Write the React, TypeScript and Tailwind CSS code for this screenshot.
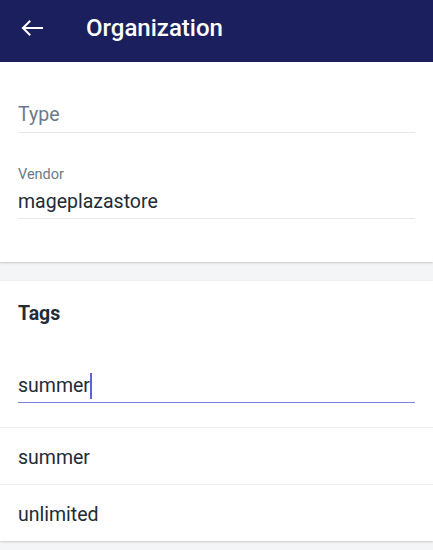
import { useState } from 'react';

export default function App() {
  const [tag, setTag] = useState('summer');
  const suggestions = ['summer', 'unlimited'];

  return (
    <div className="w-[433px] h-[550px] bg-[#f4f5f7] overflow-hidden" style={{ fontFamily: 'Roboto, "Liberation Sans", sans-serif' }}>
      <header className="h-[62px] bg-[#1c1f5e] flex items-center pb-[6px]">
        <button className="w-[86px] h-full flex items-center pl-[21px] text-white">
          <svg width="22" height="16" viewBox="0 0 22 16" fill="none" stroke="currentColor" strokeWidth="2" strokeLinecap="square">
            <path d="M21 8H2.5" />
            <path d="M8.5 1.5L2 8l6.5 6.5" />
          </svg>
        </button>
        <h1 className="text-white text-[24px] font-medium leading-[30px]">Organization</h1>
      </header>

      {/* type / vendor */}
      <section className="bg-white px-[18px] pt-[40px] pb-[43px] shadow-[0_1px_2px_rgba(0,0,0,0.18)] mb-[19px]">
        <div className="border-b border-[#e6e9ec] pb-[4px]">
          <div className="text-[19.5px] text-[#6b7a8a] leading-[26px]">Type</div>
        </div>
        <div className="mt-[33px] border-b border-[#e6e9ec] pb-[2px]">
          <div className="text-[14.5px] text-[#6b7a8a] leading-[18px]">Vendor</div>
          <div className="text-[19.5px] text-[#222b36] leading-[28px] mt-[4px]">mageplazastore</div>
        </div>
      </section>

      {/* tags */}
      <section className="bg-white shadow-[0_1px_2px_rgba(0,0,0,0.18)]">
        <div className="px-[18px] pt-[21px]">
          <h2 className="text-[19.5px] font-bold text-[#222b36] leading-[24px]">Tags</h2>
          <div className="mt-[46px] h-[28px] border-b border-[#7b82e0] box-content pb-[2px] flex items-center">
            <span className="text-[19.5px] text-[#222b36] leading-[28px]">{tag}</span>
            <span className="w-[2px] h-[26px] bg-[#5c64d6]" />
          </div>
        </div>
        <div className="mt-[24px]">
          {suggestions.map((s) => (
            <div key={s} onClick={() => setTag(s)} className="border-t border-[#eceef0] px-[18px] pt-[3px] h-[57px] flex items-center text-[19.5px] text-[#222b36] cursor-pointer">
              {s}
            </div>
          ))}
        </div>
      </section>
    </div>
  );
}
